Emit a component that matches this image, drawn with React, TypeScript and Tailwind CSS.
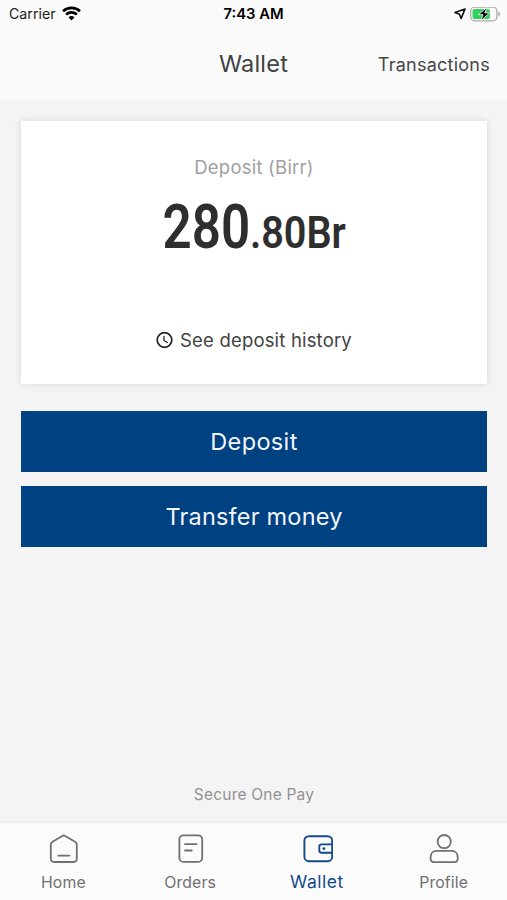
import { ReactNode } from "react";

interface TabItemProps {
  label: string;
  icon: ReactNode;
  active?: boolean;
}

const WifiIcon = () => (
  <svg width="19" height="15" viewBox="0 0 19 15" fill="none" stroke="#000" strokeWidth="2.6">
    <path d="M1 5.2C5.8.7 13.2.7 18 5.2" />
    <path d="M4.1 8.5c3-2.8 7.8-2.8 10.8 0" />
    <path d="M6.5 11.3c1.7-1.6 4.3-1.6 6 0L9.5 14.4z" fill="#000" stroke="none" />
  </svg>
);

const LocationIcon = () => (
  <svg width="12" height="12" viewBox="0 0 12 12" fill="none" stroke="#111" strokeWidth="1.6" strokeLinejoin="round">
    <path d="M11 1 1 4.6l4.4 1.6L7.2 10.4z" />
  </svg>
);

const BatteryIcon = () => (
  <svg width="31" height="15" viewBox="0 0 31 15">
    <rect x=".7" y=".2" width="26.2" height="13.6" rx="4" fill="#fff" stroke="#a8a8a8" strokeWidth="1.3" />
    <rect x="2.5" y="2" width="17.5" height="10" rx="2" fill="#35cf62" />
    <path d="M28.3 4.5v5c2.3-1 2.3-4 0-5z" fill="#a8a8a8" />
    <path d="M16.8.5 8.4 7.7h4.6l-2.2 6 8.8-7.8h-4.8z" fill="#000" stroke="#fff" strokeWidth=".8" />
  </svg>
);

const ClockIcon = () => (
  <svg width="17" height="17" viewBox="0 0 17 17" fill="none" stroke="#222" strokeLinecap="round">
    <circle cx="8.5" cy="8" r="7.3" strokeWidth="1.7" />
    <path d="M8 4.3v4.2l3.3 2" strokeWidth="1.3" />
  </svg>
);

const HomeIcon = () => (
  <svg width="32" height="32" viewBox="0 0 32 32" fill="none" stroke="currentColor" strokeWidth="1.8" strokeLinecap="round" strokeLinejoin="round">
    <path d="M15.7 2.8Q16.7 2.2 17.7 2.8L28 8.7Q29.8 9.7 29.8 11.7V25.5Q29.8 29 26.3 29H7.3Q3.8 29 3.8 25.5V11.7Q3.8 9.7 5.6 8.7z" />
    <path d="M11.3 22.6h11" />
  </svg>
);

const OrdersIcon = () => (
  <svg width="32" height="32" viewBox="0 0 32 32" fill="none" stroke="currentColor" strokeWidth="1.8" strokeLinecap="round">
    <rect x="5.4" y="2.3" width="22.8" height="26.6" rx="4" />
    <path d="M11 11.2h11.6M11 17.5h6.7" />
  </svg>
);

const WalletIcon = () => (
  <svg width="32" height="32" viewBox="0 0 32 32" fill="none" stroke="currentColor" strokeWidth="1.9" strokeLinejoin="round">
    <rect x="3.4" y="3.2" width="27.8" height="25" rx="4.5" />
    <path d="M31.2 11.4H20.5Q18.3 11.4 18.3 13.6V17.6Q18.3 19.8 20.5 19.8H31.2" />
    <circle cx="22.9" cy="15.6" r="1.4" fill="currentColor" stroke="none" />
  </svg>
);

const ProfileIcon = () => (
  <svg width="32" height="32" viewBox="0 0 32 32" fill="none" stroke="currentColor" strokeWidth="1.8">
    <circle cx="16.2" cy="8.6" r="6.6" />
    <path d="M8 17.9h16.4c3.4 0 5.4 3.3 5.4 7.3 0 2.4-1.2 3.9-3.4 3.9H5.9c-2.2 0-3.4-1.5-3.4-3.9 0-4 2.1-7.3 5.5-7.3z" />
  </svg>
);

const TabItem = ({ label, icon, active }: TabItemProps) => (
  <button className={`flex flex-1 flex-col items-center pt-[10px] ${active ? "text-[#12498c]" : "text-[#707070]"}`}>
    {icon}
    {active ? (
      <span className="mt-[5px] text-[17.5px] leading-6 tracking-[0.5px]">{label}</span>
    ) : (
      <span className="mt-[6px] text-[15.8px] leading-6 tracking-[0.1px]">{label}</span>
    )}
  </button>
);

const StatusBar = () => (
  <div className="grid h-7 grid-cols-[1fr_auto_1fr] items-center px-[6px]">
    <div className="flex items-center gap-[6px] pl-[3px]">
      <span className="text-[14.2px] text-[#222]">Carrier</span>
      <WifiIcon />
    </div>
    <span className="text-center text-[14.8px] font-semibold text-black">7:43 AM</span>
    <div className="flex items-center justify-end gap-1">
      <LocationIcon />
      <BatteryIcon />
    </div>
  </div>
);

export default function App() {
  return (
    <div className="flex h-[900px] w-[507px] flex-col overflow-hidden bg-[#f4f4f4] font-['Inter',sans-serif]">
      <header className="h-[100px] bg-[#fafafa]">
        <StatusBar />
        <div className="grid h-[72px] grid-cols-[1fr_auto_1fr] items-center px-[17px]">
          <span />
          <h1 className="text-[23.5px] tracking-[0.2px] text-[#414141]">Wallet</h1>
          <button className="justify-self-end text-[18px] tracking-[0.25px] text-[#484848]">Transactions</button>
        </div>
      </header>

      <main className="flex flex-1 flex-col pt-[21px] pr-5 pl-[21px]">
        <section className="flex h-[263px] flex-col items-center bg-white pt-[34px] shadow-[0_0_7px_rgba(0,0,0,0.12)]">
          <h2 className="text-[18.5px] leading-6 tracking-[0.22px] text-[#a0a0a0]">Deposit (Birr)</h2>
          <p className="mt-[13px] flex items-baseline pr-[9px] font-['Roboto',sans-serif] font-semibold leading-[70px] text-[#2e2e2e]">
            <span className="origin-right scale-x-[0.825] text-[62px]">280</span>
            <span className="origin-left scale-x-[0.91] text-[43.5px]">.80Br</span>
          </p>
          <button className="mt-auto mb-8 flex items-center gap-[7px] text-[18.5px] leading-6 tracking-[0.18px] text-[#424242]">
            <ClockIcon />
            See deposit history
          </button>
        </section>

        <div className="mt-[27px] flex flex-col gap-[14px]">
          <button className="h-[61px] bg-[#004182] text-[23.5px] tracking-[0.35px] text-[#f2f6fb]">Deposit</button>
          <button className="h-[61px] bg-[#004182] text-[23.5px] tracking-[0.2px] text-[#f2f6fb]">Transfer money</button>
        </div>

        <p className="mt-auto mb-[15px] text-center text-[15.5px] leading-6 tracking-[0.2px] text-[#929292]">Secure One Pay</p>
      </main>

      <nav className="flex h-[78px] border-t border-[#ececec] bg-[#fbfbfb]">
        <TabItem label="Home" icon={<HomeIcon />} />
        <TabItem label="Orders" icon={<OrdersIcon />} />
        <TabItem label="Wallet" icon={<WalletIcon />} active />
        <TabItem label="Profile" icon={<ProfileIcon />} />
      </nav>
    </div>
  );
}
